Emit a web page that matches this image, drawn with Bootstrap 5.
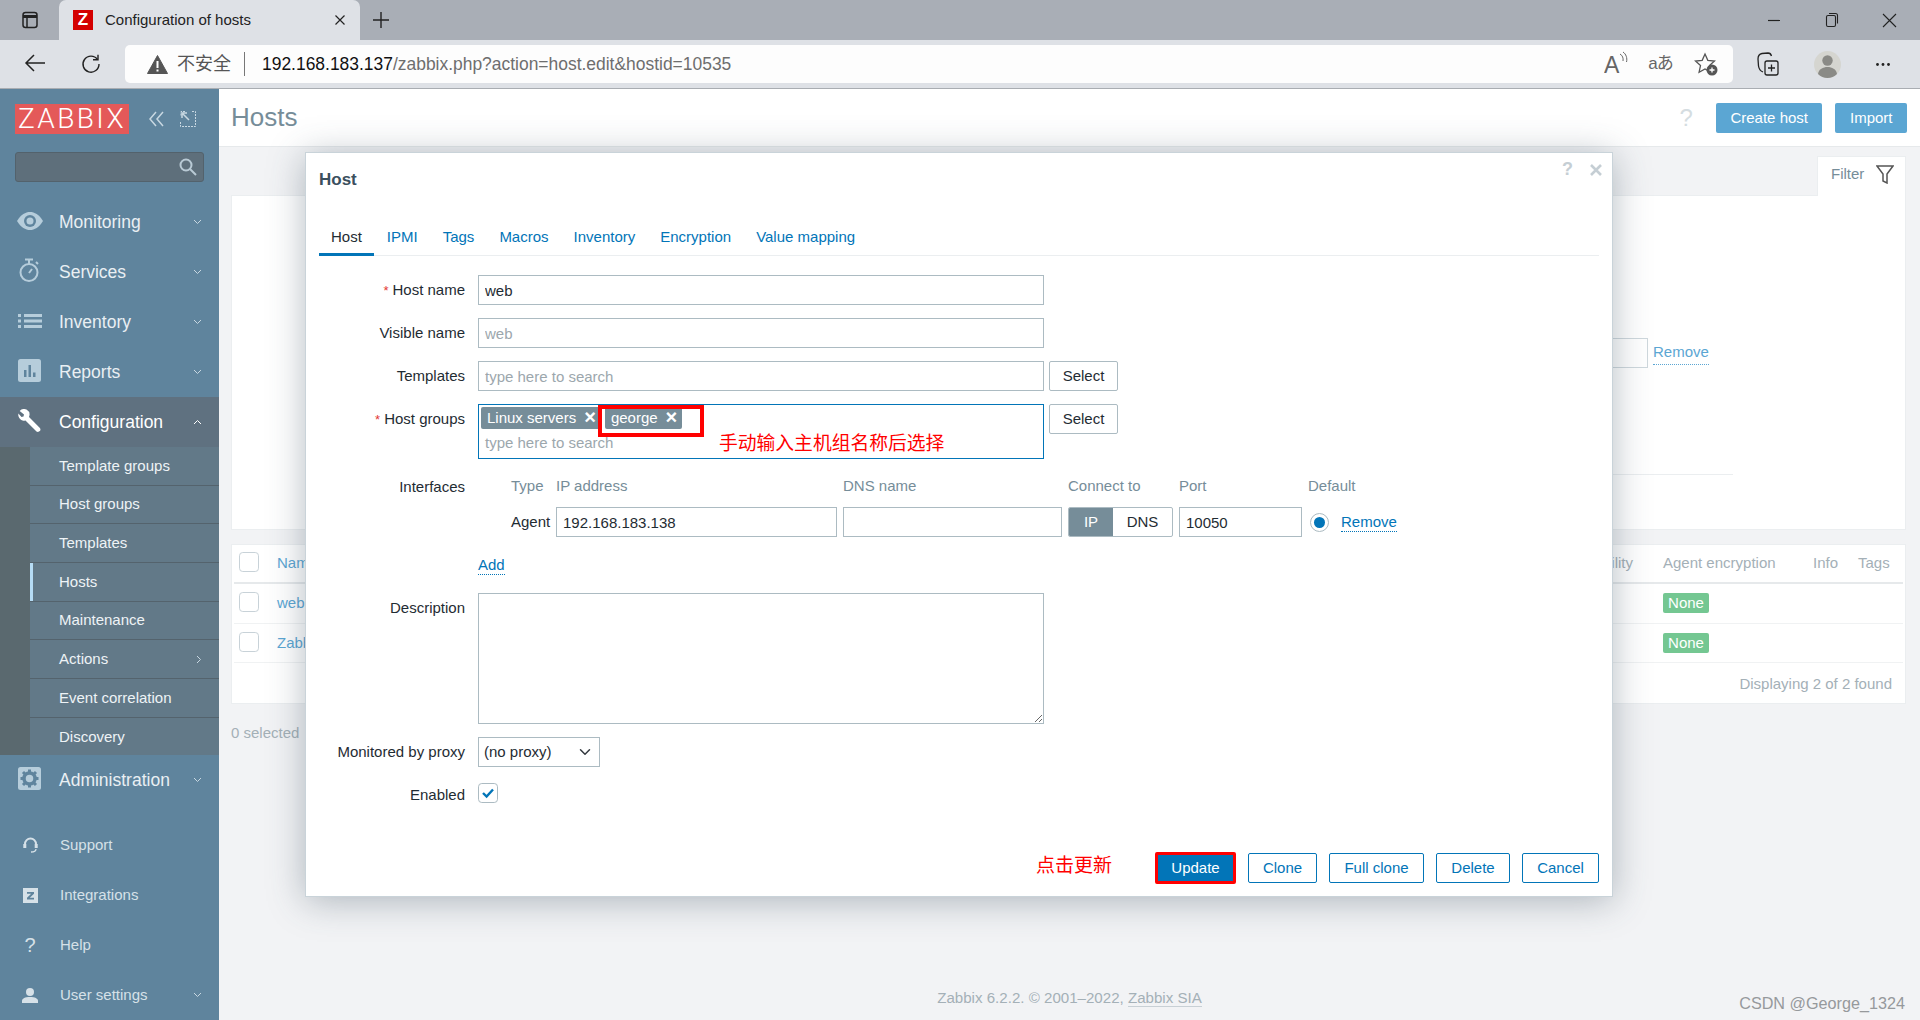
<!DOCTYPE html>
<html lang="en">
<head>
  <meta charset="UTF-8" />
  <meta name="viewport" content="width=device-width, initial-scale=1.0" />
  <title>Configuration of hosts</title>
  <link href="https://cdn.jsdelivr.net/npm/bootstrap@5.3.3/dist/css/bootstrap.min.css" rel="stylesheet">
  <style>
    html, body { height: 1020px; overflow: hidden; }
    body { font-family: "Liberation Sans", Arial, sans-serif; font-size: 15px; color: #1f2c33; background: #f2f3f5; position: relative; }
    a { text-decoration: none; }
    svg { display: block; flex: none; }

    /* browser chrome */
    .tabstrip { height: 40px; background: #a9aeb6; }
    .tab-side { width: 59px; }
    .tab-open { width: 301px; height: 40px; background: #dee1e6; border-radius: 7px 7px 0 0; padding: 0 14px; font-size: 15px; color: #222; }
    .favicon { width: 20px; height: 20px; background: #d40000; color: #fff; font-weight: 700; font-size: 17px; line-height: 20px; text-align: center; margin-right: 12px; }
    .tab-plus { width: 42px; }
    .win-btn { width: 57.5px; }
    .win-wrap { margin-right: 2px; }
    .toolbar { height: 49px; background: #dee1e6; border-bottom: 1px solid #a9adb2; }
    .tool-btn { width: 56px; }
    .tool-nav { width: 125px; padding-left: 7px; }
    .addr { width: 1608px; height: 38px; background: #fdfdfd; border-radius: 5px; padding: 0 5px 0 22px; }
    .addr-warn { color: #555; font-size: 18px; margin-left: 9px; font-family: "Liberation Sans", "Noto Sans CJK SC", sans-serif; }
    .addr-sep { width: 1px; height: 24px; background: #777; margin: 0 17px 0 13px; }
    .addr-url { font-size: 17.45px; color: #6e6e6e; }
    .addr-url b { color: #111; font-weight: 400; }
    .addr-ico { width: 45px; }
    .trans-ico { font-size: 17px; color: #666; font-family: "Liberation Sans", "Noto Sans CJK JP", sans-serif; letter-spacing: -1px; text-align: center; }
    .tr-a { width: 70px; }
    .tr-b { width: 48px; }
    .tr-c { width: 64px; }

    /* sidebar */
    .shell { height: 931px; }
    .side { width: 219px; background: #5f849d; color: #eef3f6; }
    .logo-row { padding: 15px 15px 18px; }
    .zbx-logo { width: 114px; height: 30px; background: #e45959; color: #fff; font-family: Roboto, "Liberation Sans", sans-serif; font-weight: 300; font-size: 28px; line-height: 30px; letter-spacing: 2.4px; text-align: center; white-space: nowrap; }
    .collapse-ico { margin-right: 15px; }
    .side-search { height: 30px; margin: 0 15px 15px; background: #5e6f7b; border: 1px solid #53626c; border-radius: 3px; padding-right: 5px; }
    .menu-main { height: 50px; font-size: 17.5px; color: #e9eff3; }
    .menu-main.on { background: #5f7180; color: #fff; }
    .menu-ico { width: 59px; }
    .menu-low .menu-ico { width: 60px; }
    .menu-chev { margin-left: auto; margin-right: 17px; }
    .sub-wrap { height: 308px; overflow: hidden; background: #5a696f; padding-left: 30px; }
    .sub-item { height: 38.7px; background: #627988; border-bottom: 1px solid #54636d; padding-left: 29px; color: #eef3f6; }
    .sub-item:last-child { border-bottom: 0; }
    .sub-item.on { box-shadow: inset 3px 0 0 #b5dcf5; }
    .menu-foot { margin-top: 15px; }
    .menu-low { height: 50px; color: #d6e1e8; }
    .ico-up { margin-top: -3px; }

    /* page behind */
    .page { min-width: 0; }
    .page-head { height: 58px; background: #fff; border-bottom: 1px solid #e6e9eb; padding: 0 13px 0 12px; }
    .page-title { font-size: 26px; color: #768d99; }
    .page-help { font-size: 24px; color: #d5dde1; margin-right: 10px; }
    .btn-soft { background: #5ba6d3; color: #fff; border: 0; border-radius: 2px; height: 30px; font-size: 15px; padding: 0 14.5px; line-height: 30px; margin-left: 13px; }
    .page-body { padding: 9px 14px 0 12px; }
    .filter-tab { width: 89px; height: 40px; background: #fff; border: 1px solid #ebeef0; border-bottom: 0; padding: 0 0 4px 13px; color: #768d99; gap: 12px; position: relative; z-index: 1; margin-bottom: -1px; }
    .filter-box { height: 335px; background: #fff; border: 1px solid #ebeef0; padding-top: 142px; }
    .filter-row { margin-left: 1203px; }
    .filter-in { width: 213px; height: 30px; border: 1px solid #cfd8dd; }
    .soft-link { color: #5ba6d3; border-bottom: 1px dotted #5ba6d3; margin-left: 5px; }
    .filter-line { height: 1px; width: 1201px; margin-left: 300px; margin-top: 106px; background: #ebeef0; }
    .list-box { height: 160px; margin-top: 14px; background: #fff; border: 1px solid #ebeef0; }
    .list-row { display: grid; grid-template-columns: 43px 1fr 150px 45px 45px; align-items: center; border-bottom: 1px solid #f0f2f3; }
    .list-head { height: 39px; border-bottom: 2px solid #e6e9eb; color: #a4b0b7; margin: 0 2px; }
    .list-item { height: 39.5px; margin: 0 2px; }
    .list-row > :first-child { padding-left: 5px; }
    .cell-avail { text-align: right; padding-right: 30px; }
    .list-name { color: #5ba6d3; }
    .chk-soft { width: 20px; height: 20px; margin: 0; border: 1px solid #c8d2d8; border-radius: 2px; }
    .none-tag { display: inline-block; width: 46px; height: 20px; line-height: 20px; background: #74c792; color: #fff; text-align: center; border-radius: 2px; }
    .list-foot { height: 41px; padding: 2px 13px 0 0; color: #a4b0b7; }
    .sel-count { color: #a4b0b7; margin-top: 18px; }
    .page-foot { margin-top: auto; padding-bottom: 10px; color: #a4b0b7; font-size: 15.1px; text-align: center; }
    .page-foot a { color: #a4b0b7; border-bottom: 1px solid #c8d0d5; }

    /* dialog */
    .host-dlg { position: absolute; left: 305px; top: 152px; width: 1308px; height: 745px; background: #fff; border: 1px solid #c9d3d9; padding: 0 13px; box-shadow: 0 4px 34px rgba(60, 80, 95, .38); z-index: 5; }
    .dlg-head { height: 69px; padding-top: 18px; }
    .dlg-title { font-size: 17px; font-weight: 700; color: #3a4f5e; line-height: 18px; }
    .dlg-ctrl { color: #c5ced4; font-size: 18px; font-weight: 700; line-height: 17px; gap: 16.5px; margin: -10px -2.5px 0 0; }
    .tab-line { border-bottom: 1px solid #ebeef0; height: 34px; margin-bottom: 19px; }
    .tab-lnk { color: #0275b8; padding: 0 12px; margin-right: 1px; height: 34px; line-height: 29px; }
    .tab-lnk.on { color: #1f2c33; border-bottom: 3px solid #0275b8; }
    .frm { gap: 13px; }
    .frm-lbl { width: 146px; margin-right: 13px; text-align: right; line-height: 29px; flex: none; }
    .req { color: #e33734; margin-right: 4px; font-size: 13px; }
    .fld { width: 566px; height: 30px; padding: 0 6px; font-size: 15px; color: #1f2c33; border: 1px solid #acbbc2; border-radius: 0; }
    .fld::placeholder { color: #9ca7ad; opacity: 1; }
    .btn-sel { width: 69px; height: 30px; padding: 0; margin-left: 5px; font-size: 15px; background: #fff; color: #1f2c33; border: 1px solid #acbbc2; border-radius: 2px; }
    .multi { position: relative; width: 566px; height: 55px; border: 1px solid #0275b8; padding: 2px; }
    .multi-tag { height: 22px; padding: 0 6px; background: #768d99; color: #fff; border-radius: 2px; line-height: 22px; gap: 8px; margin-right: 4px; }
    .multi-tag b { font-size: 20px; line-height: 21px; margin-right: -1px; }
    .multi-ph { color: #9ca7ad; line-height: 28px; padding-left: 4px; }
    .mark-box { position: absolute; left: 119px; top: 0; width: 106px; height: 32px; border: 4px solid #f00; }
    .mark-note { position: absolute; left: 240px; top: 25px; color: #f00; font-size: 18.8px; line-height: 24px; font-family: "Noto Sans CJK SC", sans-serif; white-space: nowrap; }
    .iface { display: grid; grid-template-columns: 72px 281px 219px 105px 123px auto; column-gap: 6px; row-gap: 7px; align-items: center; }
    .iface-h { height: 28px; line-height: 28px; color: #768d99; }
    .iface-type { padding-left: 33px; }
    .iface-in { width: 100%; }
    .seg { height: 30px; border: 1px solid #acbbc2; border-radius: 2px; overflow: hidden; }
    .seg span { height: 100%; display: flex; align-items: center; justify-content: center; }
    .seg-ip { width: 44px; background: #768d99; color: #fff; }
    .seg-dns { flex: 1; }
    .radio-z { width: 19px; height: 19px; margin: 0 0 0 2px; border: 1px solid #acbbc2; background-color: #fff; background-size: 19px; }
    .radio-z:checked { border-color: #acbbc2; background-color: #fff; background-image: url("data:image/svg+xml,%3csvg xmlns='http://www.w3.org/2000/svg' viewBox='0 0 19 19'%3e%3ccircle cx='9.5' cy='9.5' r='5.5' fill='%230275b8'/%3e%3c/svg%3e"); }
    .dot-link { color: #0275b8; border-bottom: 1px dotted #0275b8; line-height: 18px; }
    .add-row { height: 30px; }
    .desc { width: 566px; height: 131px; border: 1px solid #acbbc2; border-radius: 0; }
    .sel-proxy { width: 122px; height: 30px; padding: 0 5px; font-size: 15px; color: #1f2c33; border: 1px solid #acbbc2; border-radius: 0; background-position: right 6px center; }
    .chk-z { width: 20px; height: 20px; margin: 3px 0 0; border: 1px solid #acbbc2; border-radius: 2px; }
    .chk-z:checked { background-color: #fff; border-color: #acbbc2; background-size: 20px; background-image: url("data:image/svg+xml,%3csvg xmlns='http://www.w3.org/2000/svg' viewBox='0 0 20 20'%3e%3cpath fill='none' stroke='%230275b8' stroke-width='2.4' d='M5 10l3.6 3.6L15 6.5'/%3e%3c/svg%3e"); }
    .dlg-foot { margin-top: auto; padding-bottom: 10px; gap: 12px; }
    .foot-note { color: #f00; font-size: 19px; margin: 0 31px 8px 0; font-family: "Noto Sans CJK SC", sans-serif; }
    .btn-line { height: 30px; padding: 0; background: #fff; color: #0275b8; border: 1px solid #0275b8; border-radius: 2px; font-size: 15px; }
    .btn-upd { width: 81px; height: 32px; padding: 0; background: #0275b8; color: #fff; border: 3px solid #f00; border-radius: 2px; font-size: 15px; }
    .csdn-mark { position: absolute; right: 15px; top: 991px; font-size: 16.2px; color: #96999c; z-index: 6; }
  </style>
</head>
<body>

<div class="tabstrip d-flex align-items-end">
  <div class="tab-side d-flex align-items-center justify-content-center h-100">
    <svg width="20" height="20" viewBox="0 0 20 20" fill="none" stroke="#222" stroke-width="1.5"><rect x="3" y="2.5" width="14" height="15" rx="2.5"/><path d="M3 6.5h14" stroke-width="3"/><path d="M7 7v10"/></svg>
  </div>
  <div class="tab-open d-flex align-items-center">
    <span class="favicon">Z</span>
    <span>Configuration of hosts</span>
    <svg class="ms-auto" width="12" height="12" viewBox="0 0 12 12" stroke="#222" stroke-width="1.2"><path d="M1.5 1.5l9 9M10.500 1.5l-9 9"/></svg>
  </div>
  <div class="tab-plus d-flex align-items-center justify-content-center h-100">
    <svg width="18" height="18" viewBox="0 0 18 18" stroke="#222" stroke-width="1.4"><path d="M9 1v16M1 9h16"/></svg>
  </div>
  <div class="win-wrap ms-auto d-flex h-100">
    <div class="win-btn d-flex align-items-center justify-content-center"><svg width="14" height="14" viewBox="0 0 14 14" stroke="#222" stroke-width="1.2"><path d="M1 7.500h12"/></svg></div>
    <div class="win-btn d-flex align-items-center justify-content-center"><svg width="14" height="16" viewBox="0 0 14 16" fill="none" stroke="#222" stroke-width="1.1"><rect x="1.5" y="3.5" width="9" height="11" rx="1.5"/><path d="M4 1.5h6.500a2 2 0 0 1 2 2v8"/></svg></div>
    <div class="win-btn d-flex align-items-center justify-content-center"><svg width="15" height="15" viewBox="0 0 15 15" stroke="#222" stroke-width="1.1"><path d="M1 1l13 13M14 1L1 14"/></svg></div>
  </div>
</div>

<div class="toolbar d-flex align-items-center">
  <div class="tool-nav d-flex">
    <div class="tool-btn d-flex justify-content-center">
      <svg width="22" height="20" viewBox="0 0 22 20" fill="none" stroke="#222" stroke-width="1.5"><path d="M21 10H2M10 2l-8 8 8 8"/></svg>
    </div>
    <div class="tool-btn d-flex justify-content-center">
      <svg width="20" height="22" viewBox="0 0 20 22" fill="none" stroke="#222" stroke-width="1.4"><path d="M16.500 6.500A8 8 0 1 0 18 11"/><path d="M12 6.800h5V1.800"/></svg>
    </div>
  </div>
  <div class="addr d-flex align-items-center">
    <svg width="21" height="19" viewBox="0 0 21 19"><path d="M10.500 .5L20.500 18.500H.5z" fill="#555" stroke="#555" stroke-linejoin="round"/><path d="M10.500 6v7M10.500 14.500v2" stroke="#fff" stroke-width="2"/></svg>
    <span class="addr-warn">不安全</span>
    <span class="addr-sep"></span>
    <span class="addr-url"><b>192.168.183.137</b>/zabbix.php?action=host.edit&amp;hostid=10535</span>
    <div class="ms-auto d-flex align-items-center">
      <div class="addr-ico d-flex justify-content-center">
        <svg width="24" height="26" viewBox="0 0 24 26"><text x="0" y="22" font-family="Liberation Sans" font-size="23" fill="#666">A</text><path d="M16 3c2.500 1.500 3.500 4 3 7M19 1c3 2 4.500 6 3.500 10" fill="none" stroke="#666"/></svg>
      </div>
      <div class="addr-ico trans-ico">aあ</div>
      <div class="addr-ico d-flex justify-content-center">
        <svg width="24" height="24" viewBox="0 0 24 24"><path d="M11 2l2.800 6.300 6.700.7-5 4.600 1.400 6.600L11 17l-5.900 3.200 1.400-6.600-5-4.600 6.700-.7z" fill="none" stroke="#555" stroke-width="1.300"/><circle cx="18" cy="18" r="5.500" fill="#555"/><path d="M18 15.500v5M15.500 18h5" stroke="#fff" stroke-width="1.300"/></svg>
      </div>
    </div>
  </div>
  <div class="d-flex align-items-center">
    <div class="tr-a d-flex justify-content-center">
      <svg width="22" height="24" viewBox="0 0 22 24" fill="none" stroke="#222" stroke-width="1.300"><rect x="8" y="9" width="13" height="14" rx="2"/><path d="M14.500 12.500v7M11 16h7"/><path d="M6 20C3 19 2 17 1.500 14L1 7c0-3 1-5 4-5.500L11 1c2 0 3 1 3.500 3"/></svg>
    </div>
    <div class="tr-b d-flex justify-content-center">
      <svg width="27" height="27" viewBox="0 0 27 27"><circle cx="13.500" cy="13.500" r="13.500" fill="#d5d5d0"/><circle cx="13.500" cy="9.500" r="5.200" fill="#8a8a86"/><path d="M4 23c.8-5 5-7 9.500-7s8.700 2 9.500 7c-2.500 2.500-6 4-9.500 4s-7-1.500-9.500-4z" fill="#8a8a86"/></svg>
    </div>
    <div class="tr-c d-flex justify-content-center">
      <svg width="14" height="3" viewBox="0 0 14 3" fill="#222"><circle cx="1.500" cy="1.500" r="1.400"/><circle cx="7" cy="1.500" r="1.400"/><circle cx="12.500" cy="1.500" r="1.400"/></svg>
    </div>
  </div>
</div>

<div class="shell d-flex">
  <aside class="side flex-shrink-0">
    <div class="logo-row d-flex align-items-center">
      <div class="zbx-logo">ZABBIX</div>
      <svg class="collapse-ico ms-auto" width="17" height="16" viewBox="0 0 17 16" fill="none" stroke="#c8d8e2" stroke-width="1.500"><path d="M8 1L2 8l6 7M15 1L9 8l6 7"/></svg>
      <svg class="me-2" width="16" height="16" viewBox="0 0 16 16" fill="none" stroke="#c8d8e2"><path d="M5 .5H1v4M.5 11v4.500H15.500V.5H11" stroke-dasharray="2 1"/><path d="M9 9L3 3M2 7V2h5" stroke-width="1.500"/></svg>
    </div>
    <div class="side-search d-flex align-items-center justify-content-end">
      <svg width="20" height="20" viewBox="0 0 20 20" fill="none" stroke="#b9cad5" stroke-width="2"><circle cx="8" cy="8" r="5.500"/><path d="M12 12l6 6"/></svg>
    </div>

    <div class="menu-main d-flex align-items-center">
      <div class="menu-ico d-flex justify-content-center ico-up"><svg width="28" height="20" viewBox="0 0 28 20"><path d="M1 10C5 3.500 9.500 1 14 1s9 2.500 13 9c-4 6.500-8.500 9-13 9S5 16.500 1 10z" fill="#b6cddb"/><circle cx="14" cy="10" r="6" fill="#5f849d"/><circle cx="14" cy="10" r="3.500" fill="#b6cddb"/></svg></div>
      Monitoring
      <svg class="menu-chev" width="9" height="6" viewBox="0 0 9 6" fill="none" stroke="#c8d8e2"><path d="M1 1l3.500 3.500L8 1"/></svg>
    </div>
    <div class="menu-main d-flex align-items-center">
      <div class="menu-ico d-flex justify-content-center ico-up"><svg width="24" height="25" viewBox="0 0 24 25" fill="none" stroke="#b6cddb" stroke-width="2"><circle cx="11" cy="14.500" r="8.500"/><path d="M7 1.500h8M11 1.500V6M18 4l2 2M11 15l3-4"/></svg></div>
      Services
      <svg class="menu-chev" width="9" height="6" viewBox="0 0 9 6" fill="none" stroke="#c8d8e2"><path d="M1 1l3.500 3.500L8 1"/></svg>
    </div>
    <div class="menu-main d-flex align-items-center">
      <div class="menu-ico d-flex justify-content-center ico-up"><svg width="24" height="14" viewBox="0 0 24 14" fill="#b6cddb"><rect width="3" height="3"/><rect y="5.500" width="3" height="3"/><rect y="11" width="3" height="3"/><rect x="6" width="18" height="3"/><rect x="6" y="5.500" width="18" height="3"/><rect x="6" y="11" width="18" height="3"/></svg></div>
      Inventory
      <svg class="menu-chev" width="9" height="6" viewBox="0 0 9 6" fill="none" stroke="#c8d8e2"><path d="M1 1l3.500 3.500L8 1"/></svg>
    </div>
    <div class="menu-main d-flex align-items-center">
      <div class="menu-ico d-flex justify-content-center ico-up"><svg width="23" height="23" viewBox="0 0 23 23"><rect width="23" height="23" rx="2.500" fill="#b6cddb"/><path d="M6 11h2.500v7H6zM10.500 6H13v12h-2.500zM15 13.500h2.500V18H15z" fill="#5f849d"/></svg></div>
      Reports
      <svg class="menu-chev" width="9" height="6" viewBox="0 0 9 6" fill="none" stroke="#c8d8e2"><path d="M1 1l3.500 3.500L8 1"/></svg>
    </div>
    <div class="menu-main on d-flex align-items-center">
      <div class="menu-ico d-flex justify-content-center ico-up"><svg width="23" height="23" viewBox="0 0 23 23"><path d="M8.500.6a6 6 0 0 0-6.800 1.300L6 5.500 5.500 7.500 3.500 8 .4 4.500A6 6 0 0 0 7.500 11.500L18.500 22.500c1 .7 2.500.5 3.300-.4.800-.9.900-2.300.1-3.200L11 8A6 6 0 0 0 8.500.6z" fill="#fff"/></svg></div>
      Configuration
      <svg class="menu-chev" width="9" height="6" viewBox="0 0 9 6" fill="none" stroke="#fff"><path d="M1 5l3.500-3.500L8 5"/></svg>
    </div>
    <div class="sub-wrap">
      <div class="sub-item d-flex align-items-center">Template groups</div>
      <div class="sub-item d-flex align-items-center">Host groups</div>
      <div class="sub-item d-flex align-items-center">Templates</div>
      <div class="sub-item on d-flex align-items-center">Hosts</div>
      <div class="sub-item d-flex align-items-center">Maintenance</div>
      <div class="sub-item d-flex align-items-center">Actions
        <svg class="menu-chev" width="6" height="9" viewBox="0 0 6 9" fill="none" stroke="#c8d8e2"><path d="M1 1l3.500 3.500L1 8"/></svg>
      </div>
      <div class="sub-item d-flex align-items-center">Event correlation</div>
      <div class="sub-item d-flex align-items-center">Discovery</div>
    </div>
    <div class="menu-main d-flex align-items-center">
      <div class="menu-ico d-flex justify-content-center ico-up"><svg width="23" height="23" viewBox="0 0 23 23"><rect width="23" height="23" rx="2.500" fill="#b6cddb"/><circle cx="11.500" cy="11.500" r="5.500" fill="none" stroke="#5f849d" stroke-width="3.500"/><path d="M11.500 2.500v3M11.500 17.500v3M2.500 11.500h3M17.500 11.500h3M5 5l2.200 2.200M15.800 15.800L18 18M18 5l-2.200 2.200M7.200 15.800L5 18" stroke="#5f849d" stroke-width="3"/></svg></div>
      Administration
      <svg class="menu-chev" width="9" height="6" viewBox="0 0 9 6" fill="none" stroke="#c8d8e2"><path d="M1 1l3.500 3.500L8 1"/></svg>
    </div>

    <div class="menu-foot">
      <div class="menu-low d-flex align-items-center">
        <div class="menu-ico d-flex justify-content-center"><svg width="15" height="16" viewBox="0 0 15 16" fill="none" stroke="#d6e1e8" stroke-width="2"><path d="M2 10V7a5.500 5.500 0 0 1 11 0v3"/><path d="M1.800 7v4M13.200 7v4" stroke-width="3"/><path d="M13 12c0 2-2 3-5 3" stroke-width="1.300"/></svg></div>
        Support
      </div>
      <div class="menu-low d-flex align-items-center">
        <div class="menu-ico d-flex justify-content-center"><svg width="15" height="15" viewBox="0 0 15 15"><rect width="15" height="15" fill="#d6e1e8"/><path d="M4 4h7v1.800L6.800 9.800H11V11.500H4V9.700L8.200 5.700H4z" fill="#5f849d"/></svg></div>
        Integrations
      </div>
      <div class="menu-low d-flex align-items-center">
        <div class="menu-ico d-flex justify-content-center fs-5">?</div>
        Help
      </div>
      <div class="menu-low d-flex align-items-center">
        <div class="menu-ico d-flex justify-content-center"><svg width="16" height="15" viewBox="0 0 16 15" fill="#d6e1e8"><circle cx="8" cy="4" r="4"/><path d="M0 15v-2c0-2.500 3-4 8-4s8 1.500 8 4v2z"/></svg></div>
        User settings
        <svg class="menu-chev" width="9" height="6" viewBox="0 0 9 6" fill="none" stroke="#c8d8e2"><path d="M1 1l3.500 3.500L8 1"/></svg>
      </div>
    </div>
  </aside>

  <main class="page flex-fill d-flex flex-column">
    <div class="page-head d-flex align-items-center">
      <div class="page-title">Hosts</div>
      <div class="page-help ms-auto">?</div>
      <a class="btn-soft" href="#">Create host</a>
      <a class="btn-soft" href="#">Import</a>
    </div>
    <div class="page-body">
      <div class="d-flex justify-content-end">
        <div class="filter-tab d-flex align-items-center">
          Filter
          <svg width="18" height="19" viewBox="0 0 18 19" fill="none" stroke="#555" stroke-width="1.500"><path d="M1 1h16l-6 8v9l-4-2V9z"/></svg>
        </div>
      </div>
      <div class="filter-box">
        <div class="filter-row d-flex align-items-center">
          <div class="filter-in"></div>
          <a class="soft-link" href="#">Remove</a>
        </div>
        <div class="filter-line"></div>
      </div>
      <div class="list-box">
        <div class="list-row list-head">
          <div><input class="form-check-input chk-soft" type="checkbox"></div>
          <div class="d-flex"><span class="list-name">Name</span><span class="cell-avail ms-auto">Availability</span></div>
          <div>Agent encryption</div><div>Info</div><div>Tags</div>
        </div>
        <div class="list-row list-item">
          <div><input class="form-check-input chk-soft" type="checkbox"></div>
          <div class="list-name">web</div>
          <div><span class="none-tag">None</span></div><div></div><div></div>
        </div>
        <div class="list-row list-item">
          <div><input class="form-check-input chk-soft" type="checkbox"></div>
          <div class="list-name">Zabbix server</div>
          <div><span class="none-tag">None</span></div><div></div><div></div>
        </div>
        <div class="list-foot d-flex align-items-center justify-content-end">Displaying 2 of 2 found</div>
      </div>
      <div class="sel-count">0 selected</div>
    </div>
    <div class="page-foot">Zabbix 6.2.2. © 2001–2022, <a href="#">Zabbix SIA</a></div>
  </main>
</div>

<div class="host-dlg d-flex flex-column">
  <div class="dlg-head d-flex justify-content-between align-items-start">
    <div class="dlg-title">Host</div>
    <div class="dlg-ctrl d-flex align-items-center">
      <span>?</span>
      <svg width="12" height="12" viewBox="0 0 12 12" stroke="#c5ced4" stroke-width="2.600"><path d="M1 1l10 10M11 1L1 11"/></svg>
    </div>
  </div>
  <div class="tab-line d-flex">
    <a class="tab-lnk on" href="#">Host</a>
    <a class="tab-lnk" href="#">IPMI</a>
    <a class="tab-lnk" href="#">Tags</a>
    <a class="tab-lnk" href="#">Macros</a>
    <a class="tab-lnk" href="#">Inventory</a>
    <a class="tab-lnk" href="#">Encryption</a>
    <a class="tab-lnk" href="#">Value mapping</a>
  </div>

  <form class="frm d-flex flex-column">
    <div class="d-flex">
      <label class="frm-lbl"><span class="req">*</span>Host name</label>
      <input class="form-control fld" type="text" value="web">
    </div>
    <div class="d-flex">
      <label class="frm-lbl">Visible name</label>
      <input class="form-control fld" type="text" placeholder="web">
    </div>
    <div class="d-flex">
      <label class="frm-lbl">Templates</label>
      <input class="form-control fld" type="text" placeholder="type here to search">
      <button type="button" class="btn btn-sel">Select</button>
    </div>
    <div class="d-flex align-items-start">
      <label class="frm-lbl"><span class="req">*</span>Host groups</label>
      <div class="multi">
        <div class="d-flex">
          <span class="multi-tag d-flex">Linux servers <b>×</b></span>
          <span class="multi-tag d-flex">george <b>×</b></span>
        </div>
        <div class="multi-ph">type here to search</div>
        <div class="mark-box"></div>
        <div class="mark-note">手动输入主机组名称后选择</div>
      </div>
      <button type="button" class="btn btn-sel">Select</button>
    </div>
    <div class="d-flex">
      <label class="frm-lbl">Interfaces</label>
      <div class="iface">
        <div class="iface-h iface-type">Type</div>
        <div class="iface-h">IP address</div>
        <div class="iface-h">DNS name</div>
        <div class="iface-h">Connect to</div>
        <div class="iface-h">Port</div>
        <div class="iface-h">Default</div>
        <div class="iface-type">Agent</div>
        <input class="form-control fld iface-in" type="text" value="192.168.183.138">
        <input class="form-control fld iface-in" type="text">
        <div class="seg d-flex"><span class="seg-ip">IP</span><span class="seg-dns">DNS</span></div>
        <input class="form-control fld iface-in" type="text" value="10050">
        <div class="d-flex align-items-center gap-2">
          <input class="form-check-input radio-z" type="radio" checked>
          <a class="dot-link ms-1" href="#">Remove</a>
        </div>
      </div>
    </div>
    <div class="d-flex add-row align-items-center">
      <div class="frm-lbl"></div>
      <a class="dot-link" href="#">Add</a>
    </div>
    <div class="d-flex">
      <label class="frm-lbl">Description</label>
      <textarea class="form-control desc"></textarea>
    </div>
    <div class="d-flex">
      <label class="frm-lbl">Monitored by proxy</label>
      <select class="form-select sel-proxy"><option>(no proxy)</option></select>
    </div>
    <div class="d-flex">
      <label class="frm-lbl">Enabled</label>
      <input class="form-check-input chk-z" type="checkbox" checked>
    </div>
  </form>

  <div class="dlg-foot d-flex align-items-center justify-content-end">
    <span class="foot-note">点击更新</span>
    <button type="button" class="btn btn-upd">Update</button>
    <button type="button" class="btn btn-line" style="width:69px">Clone</button>
    <button type="button" class="btn btn-line" style="width:95px">Full clone</button>
    <button type="button" class="btn btn-line" style="width:74px">Delete</button>
    <button type="button" class="btn btn-line" style="width:77px">Cancel</button>
  </div>
</div>

<div class="csdn-mark">CSDN @George_1324</div>

<script src="https://cdn.jsdelivr.net/npm/bootstrap@5.3.3/dist/js/bootstrap.bundle.min.js"></script>
</body>
</html>
